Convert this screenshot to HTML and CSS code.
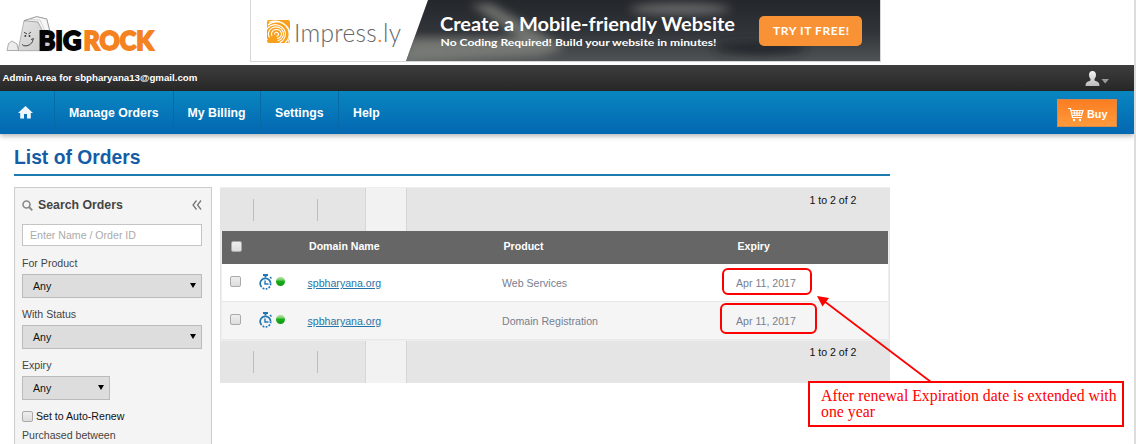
FILE: index.html
```html
<!DOCTYPE html>
<html lang="en">
<head>
<meta charset="utf-8">
<title>List of Orders</title>
<link rel="stylesheet" href="styles.css">
</head>
<body>
<div class="page">
  <header class="masthead">
    <svg class="logo" width="160" height="48" viewBox="0 0 160 48">
      <defs><linearGradient id="rock" x1="0" x2="1" y1="0" y2="1"><stop offset="0" stop-color="#e6e6e6"/><stop offset="1" stop-color="#c8c8c8"/></linearGradient></defs>
      <path d="M18 38.700 L24 8.700 L36.700 4.700 L46.700 7 L50 20 L52 38.700Z" fill="url(#rock)" stroke="#999" stroke-width=".7"/>
      <path d="M24 8.700 L36.700 4.700 L46.700 7 L50 20 L43 20 L38 10Z" fill="#f6f6f6" stroke="#888" stroke-width=".7"/>
      <path d="M30 7.500 L40 8 L45 19" fill="none" stroke="#bbb" stroke-width=".6"/>
      <path d="M7 38.500 L8.500 31.500 L12 29 L17 32 L18.500 38.500Z" fill="#ececec" stroke="#999" stroke-width=".8"/>
      <path d="M24 20.300 L27 22 M31 20 L28.500 22 M22 32.300 Q23 34.500 27 33.800 Q33 32 33 27 M31 27.500 L34 26.500" fill="none" stroke="#444" stroke-width="1"/>
      <circle cx="25.300" cy="24" r=".9" fill="#333"/><circle cx="29.500" cy="24" r=".9" fill="#333"/>
      <text class="logo-text" x="38.500" y="38.300" textLength="43" lengthAdjust="spacingAndGlyphs">BIG</text>
      <text class="logo-text orange" x="83.500" y="38.300" textLength="70" lengthAdjust="spacingAndGlyphs">ROCK</text>
    </svg>
    <svg class="banner" width="631" height="63" viewBox="0 0 631 63">
      <defs>
        <linearGradient id="dark" x1="0" x2="0" y1="0" y2="1"><stop offset="0" stop-color="#24272c"/><stop offset=".5" stop-color="#303337"/><stop offset="1" stop-color="#515456"/></linearGradient>
        <filter id="soft" x="-30%" y="-50%" width="160%" height="200%"><feGaussianBlur stdDeviation="5"/></filter>
        <clipPath id="slant"><path d="M178 0H630V61H156Z"/></clipPath>
        <clipPath id="tile"><rect x="17" y="20" width="23" height="23" rx="2"/></clipPath>
      </defs>
      <rect x=".5" y="-1" width="630" height="62.500" fill="#fff" stroke="#d6d6d6"/>
      <g clip-path="url(#slant)">
        <rect x="150" width="481" height="62" fill="url(#dark)"/>
        <path d="M220 4 L242 4 L315 48 L290 56 L150 64 L160 38 L270 38Z" fill="#8b8e86" opacity=".7" filter="url(#soft)"/>
        <ellipse cx="430" cy="9" rx="50" ry="6" fill="#747774" opacity=".8" filter="url(#soft)"/>
        <ellipse cx="510" cy="48" rx="46" ry="7" fill="#1f2226" opacity=".8" filter="url(#soft)"/>
      </g>
      <g clip-path="url(#tile)" fill="none" stroke="#fff" stroke-width="1.100">
        <rect x="17" y="20" width="23" height="23" fill="#f8a01c" stroke="none"/>
        <path d="M24.500 34.500a2 2 0 1 1 2 1.800M22 36a5 4.500 0 1 1 5 2.500M19.500 37.500a7.500 7 0 1 1 8 3.300M17.500 40a10 9.500 0 1 1 12 2.800M18 25a12.500 12 0 0 1 17 18M19 22.300a15 14 0 0 1 19 20"/>
      </g>
      <text class="impress" x="44" y="41.500" textLength="107">Impress<tspan class="orange">.</tspan>ly</text>
      <text class="headline" x="190" y="31" textLength="295" lengthAdjust="spacingAndGlyphs">Create a Mobile-friendly Website</text>
      <text class="tagline" x="190.500" y="45.500" textLength="276" lengthAdjust="spacingAndGlyphs">No Coding Required! Build your website in minutes!</text>
      <rect x="509" y="16" width="103" height="30" rx="5" fill="#f99235"/>
      <text class="try" x="523" y="35" textLength="76">TRY IT FREE!</text>
    </svg>
  </header>

  <div class="adminbar">
    <span>Admin Area for sbpharyana13@gmail.com</span>
    <svg width="25" height="16" viewBox="0 0 25 16">
      <defs><linearGradient id="user" x1="0" x2="0" y1="0" y2="1"><stop offset="0" stop-color="#f5f5f5"/><stop offset="1" stop-color="#bbb"/></linearGradient></defs>
      <path d="M7.500 0C10 0 11 2 11 4C11 6 10 7 9.500 8V9.500L13 11Q14.500 12 14.500 15H.5Q.5 12 2 11L5.500 9.500V8C5 7 4 6 4 4C4 2 5 0 7.500 0Z" fill="url(#user)"/>
      <path d="M16.500 8H24L20.200 12.500Z" fill="#999"/>
    </svg>
  </div>

  <nav class="nav">
    <a class="home"><svg width="15" height="13" viewBox="0 0 15 13"><path d="M7.500 0L15 7H12.800V12.500H9V8H6V12.500H2.200V7H0Z" fill="#eef5fa"/></svg></a>
    <a class="orders">Manage Orders</a>
    <a class="billing">My Billing</a>
    <a class="settings">Settings</a>
    <a class="help">Help</a>
    <button class="buy">
      <svg width="16" height="15" viewBox="0 0 16 15"><path d="M0 1.500H2.500L4.500 10.500H14M3 3.500H15L13.500 8.500H4M3.500 6H14.500M6 3.500L7 8.500M9 3.500V8.500M12 3.500L11 8.500" fill="none" stroke="#fff" stroke-width="1.200"/><circle cx="6" cy="13" r="1.200" fill="#fff"/><circle cx="12" cy="13" r="1.200" fill="#fff"/></svg>
      <span>Buy</span>
    </button>
  </nav>

  <main class="content">
    <h1>List of Orders</h1>
    <div class="columns">
      <aside class="search">
        <div class="search-head">
          <svg width="11" height="11" viewBox="0 0 11 11"><circle cx="4.500" cy="4.500" r="3.500" fill="none" stroke="#888" stroke-width="1.600"/><path d="M7 7L10.300 10.300" stroke="#888" stroke-width="1.900"/></svg>
          <b>Search Orders</b>
          <svg width="10" height="10" viewBox="0 0 10 10"><path d="M4.500.5L1 5L4.500 9.500M9 .5L5.500 5L9 9.500" fill="none" stroke="#777" stroke-width="1.300"/></svg>
        </div>
        <div class="input">Enter Name / Order ID</div>
        <label>For Product</label>
        <div class="select"><span>Any</span><i></i></div>
        <label>With Status</label>
        <div class="select"><span>Any</span><i></i></div>
        <label>Expiry</label>
        <div class="select short"><span>Any</span><i></i></div>
        <div class="renew"><span class="check"></span>Set to Auto-Renew</div>
        <label class="between">Purchased between</label>
      </aside>

      <section class="list">
        <div class="toolbar"><div class="tool t1"></div><div class="tool t2"></div><div class="tool t3"></div><div class="tab"></div><span class="count">1 to 2 of 2</span></div>
        <div class="table">
          <div class="row head"><span class="check"></span><span></span><span>Domain Name</span><span>Product</span><span>Expiry</span></div>
          <div class="row">
            <span class="check"></span>
            <span class="status"><svg width="13" height="16" viewBox="0 0 13 16"><use href="#clock"/></svg><i class="dot"></i></span>
            <a class="cell">spbharyana.org</a><span class="cell">Web Services</span><span class="cell">Apr 11, 2017</span>
          </div>
          <div class="row alt">
            <span class="check"></span>
            <span class="status"><svg width="13" height="16" viewBox="0 0 13 16"><use href="#clock"/></svg><i class="dot"></i></span>
            <a class="cell">spbharyana.org</a><span class="cell">Domain Registration</span><span class="cell">Apr 11, 2017</span>
          </div>
        </div>
        <div class="toolbar bottom"><div class="tool t1"></div><div class="tool t2"></div><div class="tool t3"></div><div class="tab"></div><span class="count">1 to 2 of 2</span></div>
      </section>
    </div>
  </main>
</div>

<svg class="annotations" width="1136" height="444" viewBox="0 0 1136 444">
  <defs>
    <g id="clock" fill="none" stroke="#2277b3">
      <path d="M4 1H9M6.500 1V3.500" stroke-width="2"/>
      <path d="M2 12.200A5.100 5.100 0 0 1 6.500 4.400A5.100 5.100 0 0 1 11.600 9.500" stroke-width="1.700"/>
      <path d="M11.600 9.500A5.100 5.100 0 0 1 2 12.200" stroke-width="1.700" stroke-dasharray="1.800 1.300"/>
      <path d="M6 6.500V10H9.500" stroke-width="1.400"/><path d="M11 3L12.500 4.500" stroke-width="1.500"/>
    </g>
  </defs>
  <rect x="723" y="269" width="88" height="25" rx="5" class="mark"/>
  <rect x="721" y="304" width="95" height="29" rx="5" class="mark"/>
  <path d="M931 382L824 301" class="mark thin"/>
  <path d="M817 296L829 298L822.500 306.500Z" fill="#f00"/>
</svg>
<div class="note">After renewal Expiration date is extended with one year</div>
</body>
</html>
```
FILE: styles.css
```css
* { box-sizing: border-box; }
body { margin: 0; height: 444px; overflow: hidden; position: relative; background: #fff; font: 10.6px/14px "Liberation Sans", Arial, sans-serif; color: #333; }
.page { height: 444px; border-right: 2px solid #dcdcdc; overflow: hidden; }
.masthead { display: flex; height: 65px; }
.logo { margin: 12px 90px 0 0; flex: none; }
.banner { flex: none; }
.logo-text { font: 900 26px Lato, sans-serif; fill: #050505; stroke: #050505; stroke-width: 1.8px; }
.orange, .logo-text.orange { fill: #f58220; }
.logo-text.orange { stroke: #f58220; }
.impress { font: 300 24.5px Lato, sans-serif; fill: #666; }
.headline { font: 700 18.5px Lato, sans-serif; fill: #fff; }
.tagline { font: 700 10px Lato, sans-serif; fill: #fff; }
.try { font: 700 12px Lato, sans-serif; fill: #fff; }

.adminbar { height: 26px; padding: 0 24px 0 2.5px; display: flex; align-items: center; justify-content: space-between; color: #fff; font-size: 9.7px; font-weight: bold; background: linear-gradient(#3d3d3d, #272727); }
.adminbar svg { margin-top: 1px; }
.nav { height: 43px; display: flex; color: #fff; font-size: 12.3px; font-weight: bold; background: linear-gradient(#0886c0, #0467b2); box-shadow: 0 2px 5px rgba(0,0,0,.3); }
.nav a { display: flex; align-items: center; padding-left: 14px; border-right: 1px solid #066aa5; }
.nav .home { width: 55px; padding-left: 18px; }
.nav .orders { width: 118.5px; }
.nav .billing { width: 87.5px; }
.nav .settings { width: 78px; }
.nav .help { border: 0; }
.buy { display: flex; align-items: center; gap: 3px; width: 60px; height: 28px; margin: 8px 17px 0 auto; padding: 2px 0 0 10px; border: 1px solid #d58a50; background: linear-gradient(#fb7d21, #ff9a3c); color: #fff; font: bold 10.8px "Liberation Sans", sans-serif; }

.content { width: 890px; padding: 10px 0 0 14px; }
h1 { margin: 0 0 11px; height: 32px; font-size: 19.3px; line-height: 27px; color: #145da6; border-bottom: 2px solid #1d7cb0; }
.columns { display: flex; gap: 8px; }
.search { width: 198px; height: 270px; padding: 7px 9px 0 7px; background: #f4f4f4; border: 1px solid #ccc; }
.search-head { display: flex; align-items: center; height: 20px; margin-bottom: 9px; font-size: 12.3px; }
.search-head b { flex: 1; padding-left: 5px; color: #444; }
.input { height: 22px; padding: 0 7px; border: 1px solid #c4c4c4; background: #fff; color: #aaa; line-height: 20px; }
.search label { display: block; height: 28px; padding-top: 10px; color: #444; }
.select { display: flex; align-items: center; justify-content: space-between; height: 24px; margin-bottom: -1px; padding: 0 5px 1px 10px; border: 1px solid #bbb; background: #ddd; color: #111; }
.select i { border: 3px solid transparent; border-top: 5px solid #000; border-bottom: 0; }
.select.short { width: 88px; }
.renew { display: flex; align-items: center; gap: 3px; height: 14px; margin-top: 10px; color: #111; }
.search .between { padding-top: 5px; }
.check { display: block; width: 11px; height: 11px; border: 1px solid #aaa; border-radius: 2px; background: linear-gradient(#eee, #ddd); }

.list { width: 670px; height: 196px; background: #e5e5e5; }
.toolbar { display: flex; align-items: center; height: 44px; color: #111; border-top: 1px solid #eee; }
.tool { height: 22px; border-right: 1px solid #bcbcbc; }
.t1 { width: 34px; }
.t2 { width: 64px; }
.t3 { width: 47px; border: 0; }
.tab { align-self: stretch; width: 42px; background: #f2f2f2; border: 1px solid #d6d6d6; border-width: 0 1px; }
.count { margin: -20px 33.500px 0 auto; }
.table { margin: 0 1px; border: 1px solid #eee; border-width: 0 1px; }
.row { display: grid; grid-template-columns: 29px 49px 194.5px 234px 1fr; align-items: center; height: 38px; padding: 0 0 2px 7.5px; background: #fff; color: #778090; border-bottom: 1px solid #e8e8e8; }
.row.head { height: 33px; padding: 0 0 3px 9px; background: #666; color: #fff; font-weight: bold; border: 0; }
.row.alt { background: #f5f5f5; }
.cell { padding-top: 3px; }
.row a { color: #2874a6; text-decoration: underline; }
.status { display: flex; align-items: center; gap: 4px; }
.dot { width: 9px; height: 9px; border-radius: 50%; background: linear-gradient(#9cdc8c 0 20%, #18ae18 50%, #159515); }
.bottom { height: 43px; }

.annotations { position: absolute; left: 0; top: 0; }
.mark { fill: none; stroke: #f00; stroke-width: 2px; }
.mark.thin { stroke-width: 1.7px; }
.note { position: absolute; left: 808px; top: 381px; width: 316px; height: 46px; padding: 5px 0 0 11px; border: 2px solid #f00; background: #fff; color: #f00; font: 15.8px/16px "Liberation Serif", serif; }
```
